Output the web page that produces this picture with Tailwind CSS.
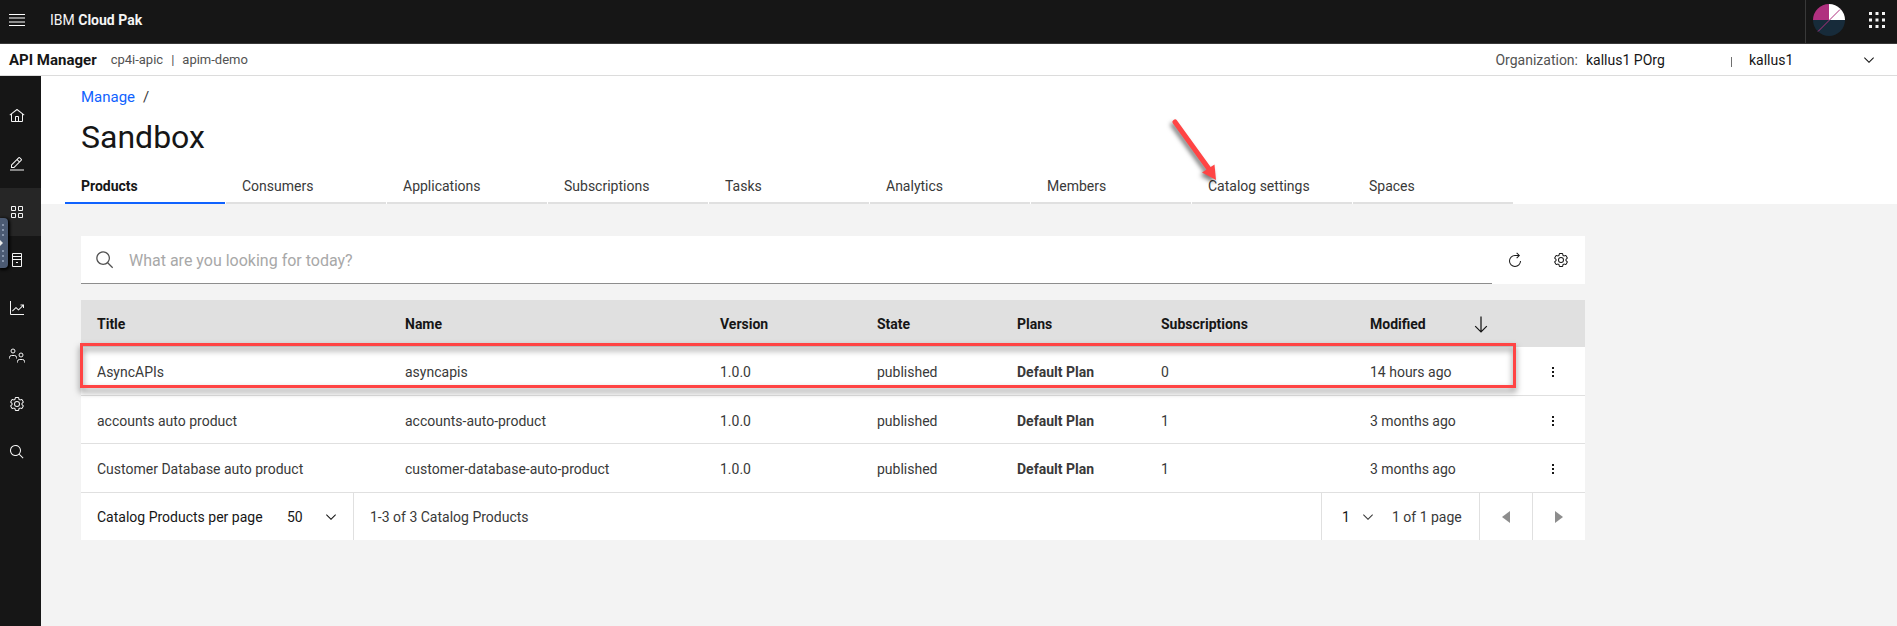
<!DOCTYPE html>
<html lang="en">
<head>
<meta charset="utf-8">
<title>API Manager – Sandbox</title>
<script src="https://cdn.jsdelivr.net/npm/@tailwindcss/browser@4"></script>
</head>
<body class="min-h-screen flex flex-col bg-[#f3f3f3] font-[Roboto,'Noto_Sans',sans-serif] text-sm leading-5 text-[#393939]">
<svg class="hidden">
  <symbol id="chevron" viewBox="0 0 16 16"><path d="M8 11L3 6l.7-.7L8 9.6l4.3-4.3.7.7z"/></symbol>
  <symbol id="search" viewBox="0 0 32 32"><path d="M29 27.6l-7.6-7.6a11 11 0 1 0-1.4 1.4l7.6 7.6zM4 13a9 9 0 1 1 9 9 9 9 0 0 1-9-9z"/></symbol>
  <symbol id="kebab" viewBox="0 0 16 16"><path d="M7 3h2v2H7zM7 7h2v2H7zM7 11h2v2H7z"/></symbol>
  <symbol id="gear" viewBox="0 0 32 32"><path d="M27 16.76v-1.53l1.92-1.68A2 2 0 0 0 29.3 11l-2.36-4a2 2 0 0 0-1.73-1 2 2 0 0 0-.64.1l-2.43.82a11.35 11.35 0 0 0-1.31-.75l-.51-2.52a2 2 0 0 0-2-1.61h-4.68a2 2 0 0 0-2 1.61l-.51 2.52a11.48 11.48 0 0 0-1.32.75l-2.38-.86A2 2 0 0 0 6.79 6a2 2 0 0 0-1.73 1L2.7 11a2 2 0 0 0 .41 2.51L5 15.24v1.53l-1.89 1.68A2 2 0 0 0 2.7 21l2.36 4a2 2 0 0 0 1.73 1 2 2 0 0 0 .64-.1l2.43-.82a11.35 11.35 0 0 0 1.31.75l.51 2.52a2 2 0 0 0 2 1.61h4.72a2 2 0 0 0 2-1.61l.51-2.52a11.48 11.48 0 0 0 1.32-.75l2.42.82a2 2 0 0 0 .64.1 2 2 0 0 0 1.73-1l2.28-4a2 2 0 0 0-.41-2.51zM25.21 24l-3.43-1.16a8.86 8.86 0 0 1-2.71 1.57L18.36 28h-4.72l-.71-3.55a9.36 9.36 0 0 1-2.7-1.57L6.79 24l-2.36-4 2.72-2.4a8.9 8.9 0 0 1 0-3.13L4.43 12l2.36-4 3.43 1.16a8.86 8.86 0 0 1 2.71-1.57L13.64 4h4.72l.71 3.55a9.36 9.36 0 0 1 2.7 1.57L25.21 8l2.36 4-2.72 2.4a8.9 8.9 0 0 1 0 3.13L27.57 20zM16 22a6 6 0 1 1 6-6 5.94 5.94 0 0 1-6 6zm0-10a3.91 3.91 0 0 0-4 4 3.91 3.91 0 0 0 4 4 3.91 3.91 0 0 0 4-4 3.91 3.91 0 0 0-4-4z"/></symbol>
</svg>

<header class="flex h-11 items-center border-b border-[#393939] bg-[#161616] text-[#f4f4f4]">
  <button type="button" aria-label="Menu" class="ml-[7px] flex size-5 items-center justify-center pb-1">
    <svg class="size-4" viewBox="0 0 16 16"><path fill="#fff" d="M0 2h16v1H0zM0 13h16v1H0z"/><path fill="#8d8d8d" d="M0 5h16v2H0zM0 9h16v2H0z"/></svg>
  </button>
  <a href="#" class="ml-[23px] pb-1">IBM <b class="font-bold">Cloud Pak</b></a>
  <div class="ml-auto flex h-full items-center border-l border-[#393939] pb-1">
    <button type="button" aria-label="Account" class="ml-[7px]">
      <svg class="size-8" viewBox="0 0 32 32"><path fill="#b0307f" d="M16 16H0A16 16 0 0 1 16 0z"/><path fill="#fff" d="M16 16V0a16 16 0 0 1 16 16z"/><path fill="#172b3a" d="M0 16h32a16 16 0 0 1-32 0z"/><path stroke="#b0307f" d="M5 27.500L27 5.500"/></svg>
    </button>
    <button type="button" aria-label="App switcher" class="mr-3 ml-6">
      <svg class="size-4" viewBox="0 0 16 16" fill="#f4f4f4"><path d="M0 0h3v3H0zM6.500 0h3v3h-3zM13 0h3v3h-3zM0 6.500h3v3H0zM6.500 6.500h3v3h-3zM13 6.500h3v3h-3zM0 13h3v3H0zM6.500 13h3v3h-3zM13 13h3v3h-3z"/></svg>
    </button>
  </div>
</header>

<div class="flex h-8 items-center border-b border-[#dcdcdc] bg-white pt-px text-[#161616]">
  <a href="#" class="ml-[9px] text-[15px] font-bold">API Manager</a>
  <div class="ml-[14px] flex gap-2 text-[13px] text-[#525252]"><span>cp4i-apic</span><span>|</span><span>apim-demo</span></div>
  <div class="ml-auto flex items-center">
    <span class="text-[#525252]">Organization:</span>
    <span class="ml-2 w-[145px]">kallus1 POrg</span>
    <span class="mt-1 h-[10px] w-px bg-[#6f6f6f]"></span>
    <button type="button" class="ml-[17px] mr-5 flex w-[128px] items-center justify-between">kallus1 <svg class="size-4" fill="currentColor"><use href="#chevron"/></svg></button>
  </div>
</div>

<div class="flex grow">
  <nav aria-label="Main" class="relative w-[41px] shrink-0 bg-[#161616] pt-4 text-[#f4f4f4]">
    <a href="#" aria-label="Home" class="flex h-12 items-center pl-[9px]"><svg class="size-4" viewBox="0 0 32 32" fill="currentColor"><path d="M16.610 2.210a1 1 0 0 0-1.240 0L1 13.420 2.240 15 4 13.620V26a2 2 0 0 0 2 2h20a2 2 0 0 0 2-2V13.630L29.760 15 31 13.430zM18 26h-4v-8h4zm2 0v-8a2 2 0 0 0-2-2h-4a2 2 0 0 0-2 2v8H6V12.060l10-7.790 10 7.800V26z"/></svg></a>
    <a href="#" aria-label="Develop" class="flex h-12 items-center pl-[9px]"><svg class="size-4" viewBox="0 0 32 32" fill="currentColor"><path d="M2 27h28v2H2zM25.400 9a2 2 0 0 0 0-2.800l-3.600-3.600a2 2 0 0 0-2.800 0l-15 15V24h6.400zm-5-5L24 7.600l-3 3L17.400 7zM6 22v-3.600l10-10 3.600 3.600-10 10z"/></svg></a>
    <a href="#" aria-label="Manage" aria-current="page" class="flex h-12 items-center bg-[#262626] pl-[9px]"><svg class="size-4" viewBox="0 0 16 16" fill="none" stroke="currentColor"><path d="M2.500 2.500h4v4h-4zM9.500 2.500h4v4h-4zM2.500 9.500h4v4h-4zM9.500 9.500h4v4h-4z"/></svg></a>
    <a href="#" aria-label="Catalogs" class="flex h-12 items-center pl-[9px]"><svg class="size-4" viewBox="0 0 16 16" fill="none" stroke="currentColor"><path d="M3.500 1.500h9v13h-9zM3 4.500h10M3 7.500h10M7 10.500h2"/></svg></a>
    <a href="#" aria-label="Analytics" class="flex h-12 items-center pl-[9px]"><svg class="size-4" viewBox="0 0 32 32" fill="currentColor"><path d="M4 2H2v26a2 2 0 0 0 2 2h26v-2H4z"/><path d="M30 9h-7v2h3.600L19 18.600l-4.300-4.300a1 1 0 0 0-1.400 0L6 21.600 7.400 23l6.600-6.600 4.300 4.300a1 1 0 0 0 1.400 0L28 12.400V16h2z"/></svg></a>
    <a href="#" aria-label="Members" class="flex h-12 items-center pl-[9px]"><svg class="size-4" viewBox="0 0 16 16" fill="none" stroke="currentColor"><circle cx="4" cy="3" r="2"/><circle cx="12" cy="7" r="2"/><path d="M.5 10.500V9.500a2 2 0 0 1 2-2h3a2 2 0 0 1 2 2v1M8.500 14.500v-1a2 2 0 0 1 2-2h3a2 2 0 0 1 2 2v1"/></svg></a>
    <a href="#" aria-label="Settings" class="flex h-12 items-center pl-[9px]"><svg class="size-4" fill="currentColor"><use href="#gear"/></svg></a>
    <a href="#" aria-label="Search" class="flex h-12 items-center pl-[9px]"><svg class="size-4" fill="currentColor"><use href="#search"/></svg></a>
    <button type="button" aria-label="Open panel" class="absolute top-[142px] left-0 h-[50px] w-2 rounded-r bg-[#4b5a73] shadow-[1px_1px_3px_1px_#000]">
      <svg class="h-[50px] w-2" viewBox="0 0 8 50"><path fill="#8796ad" d="M2 6h2v2H2zM2 11h2v2H2zM2 16h2v2H2zM2 32h2v2H2zM2 37h2v2H2zM2 42h2v2H2z"/><path fill="#e8e8e8" d="M0 22l3 3-3 3z"/></svg>
    </button>
  </nav>

  <main class="min-w-0 grow">
    <div class="relative bg-white pt-[11px]">
      <nav aria-label="Breadcrumb" class="flex gap-2 pl-10 text-[15px]"><a href="#" class="text-[#0f62fe]">Manage</a><span>/</span></nav>
      <h1 class="mt-[10px] pl-10 text-[32px] leading-10 text-[#161616]">Sandbox</h1>
      <div role="tablist" class="mt-[7px] flex gap-px pl-6">
        <button type="button" role="tab" aria-selected="true" class="h-10 w-40 border-b-2 border-[#0f62fe] pl-4 pt-[6px] text-left font-bold text-[#161616]">Products</button>
        <button type="button" role="tab" class="h-10 w-40 border-b-2 border-[#e0e0e0] pl-4 pt-[6px] text-left">Consumers</button>
        <button type="button" role="tab" class="h-10 w-40 border-b-2 border-[#e0e0e0] pl-4 pt-[6px] text-left">Applications</button>
        <button type="button" role="tab" class="h-10 w-40 border-b-2 border-[#e0e0e0] pl-4 pt-[6px] text-left">Subscriptions</button>
        <button type="button" role="tab" class="h-10 w-40 border-b-2 border-[#e0e0e0] pl-4 pt-[6px] text-left">Tasks</button>
        <button type="button" role="tab" class="h-10 w-40 border-b-2 border-[#e0e0e0] pl-4 pt-[6px] text-left">Analytics</button>
        <button type="button" role="tab" class="h-10 w-40 border-b-2 border-[#e0e0e0] pl-4 pt-[6px] text-left">Members</button>
        <button type="button" role="tab" class="h-10 w-40 border-b-2 border-[#e0e0e0] pl-4 pt-[6px] text-left">Catalog settings</button>
        <button type="button" role="tab" class="h-10 w-40 border-b-2 border-[#e0e0e0] pl-4 pt-[6px] text-left">Spaces</button>
      </div>
      <!-- callout arrow to the Catalog settings tab -->
      <svg class="absolute top-[40px] left-[1127px] h-[72px] w-[56px] drop-shadow-[-2px_3px_2px_#00000080]" viewBox="0 0 56 72"><path d="M7 6L41 53" stroke="#ff4444" stroke-width="5" stroke-linecap="round"/><path d="M48 64L34 56.500 46.500 48.500z" fill="#ff4444"/></svg>
    </div>

    <div class="max-w-[1544px] pt-8 pl-10">
      <div class="flex h-12 bg-white">
        <label class="flex grow items-center border-b border-[#8d8d8d] pl-[14px] text-[#525252]">
          <svg class="size-5" fill="currentColor"><use href="#search"/></svg>
          <input type="search" aria-label="Search products" placeholder="What are you looking for today?" class="ml-[14px] h-full grow pt-px text-base outline-none placeholder:text-[#a8a8a8]">
        </label>
        <button type="button" aria-label="Refresh" class="flex w-[45px] items-center justify-center text-[#161616]"><svg class="size-4" viewBox="0 0 32 32" fill="currentColor"><path d="M26 18A10 10 0 1 1 16 8h6.200l-3.600 3.600L20 13l6-6-6-6-1.400 1.400L22.200 6H16a12 12 0 1 0 12 12z"/></svg></button>
        <button type="button" aria-label="Table settings" class="flex w-[48px] items-center justify-center text-[#161616]"><svg class="size-4" fill="currentColor"><use href="#gear"/></svg></button>
      </div>

      <div class="relative mt-4">
        <table class="w-full table-fixed border-separate border-spacing-0 text-left [&_td]:border-b [&_td]:border-[#e0e0e0] [&_td]:pt-[2px]">
          <colgroup><col class="w-[308px]"><col class="w-[315px]"><col class="w-[157px]"><col class="w-[140px]"><col class="w-[144px]"><col class="w-[209px]"><col class="w-[167px]"><col class="w-[64px]"></colgroup>
          <thead class="bg-[#e0e0e0] text-[#161616]">
            <tr class="h-[47px]"><th class="px-4">Title</th><th class="px-4">Name</th><th class="px-4">Version</th><th class="px-4">State</th><th class="px-4">Plans</th><th class="px-4">Subscriptions</th>
              <th class="pl-4 pr-[30px]"><button type="button" class="flex w-full items-center justify-between">Modified <svg class="size-5" viewBox="0 0 32 32" fill="currentColor"><path d="M24.600 18.600L17 26.200V4h-2v22.200l-7.600-7.600L6 20l10 10 10-10z"/></svg></button></th><th><span class="sr-only">Actions</span></th></tr>
          </thead>
          <tbody class="bg-white">
            <tr class="h-[49px]"><td class="px-4">AsyncAPIs</td><td class="px-4">asyncapis</td><td class="px-4">1.0.0</td><td class="px-4">published</td><td class="px-4 font-bold">Default Plan</td><td class="px-4">0</td><td class="px-4">14 hours ago</td><td><button type="button" aria-label="Row actions" class="mx-auto block text-[#161616]"><svg class="size-4" fill="currentColor"><use href="#kebab"/></svg></button></td></tr>
            <tr class="h-12"><td class="px-4">accounts auto product</td><td class="px-4">accounts-auto-product</td><td class="px-4">1.0.0</td><td class="px-4">published</td><td class="px-4 font-bold">Default Plan</td><td class="px-4">1</td><td class="px-4">3 months ago</td><td><button type="button" aria-label="Row actions" class="mx-auto block text-[#161616]"><svg class="size-4" fill="currentColor"><use href="#kebab"/></svg></button></td></tr>
            <tr class="h-[49px]"><td class="px-4">Customer Database auto product</td><td class="px-4">customer-database-auto-product</td><td class="px-4">1.0.0</td><td class="px-4">published</td><td class="px-4 font-bold">Default Plan</td><td class="px-4">1</td><td class="px-4">3 months ago</td><td><button type="button" aria-label="Row actions" class="mx-auto block text-[#161616]"><svg class="size-4" fill="currentColor"><use href="#kebab"/></svg></button></td></tr>
          </tbody>
        </table>
        <!-- highlighted row -->
        <div class="pointer-events-none absolute top-[43px] right-[69px] -left-px h-[45px] border-3 border-[#ff4444] drop-shadow-[0_4px_3px_#00000080]"></div>
      </div>

      <div class="flex h-[47px] items-stretch bg-white">
        <div class="flex w-[273px] items-center border-r border-[#e0e0e0] pl-4 text-[#161616]">
          <label for="size" class="w-[190px]">Catalog Products per page</label>
          <select id="size" class="w-6 appearance-none outline-none"><option>50</option></select>
          <svg class="ml-3 size-4" fill="currentColor"><use href="#chevron"/></svg>
        </div>
        <div class="flex grow items-center pl-4">1-3 of 3 Catalog Products</div>
        <div class="flex w-[158px] items-center border-l border-[#e0e0e0] pl-5">
          <select aria-label="Page" class="w-[18px] appearance-none text-[#161616] outline-none"><option>1</option></select>
          <svg class="size-4" fill="currentColor"><use href="#chevron"/></svg>
          <span class="ml-4 whitespace-nowrap">1 of 1 page</span>
        </div>
        <button type="button" aria-label="Previous page" class="flex w-[53px] items-center justify-center border-l border-[#e0e0e0] text-[#8d8d8d]"><svg class="size-4" viewBox="0 0 16 16" fill="currentColor"><path d="M12 2v12L4 8z"/></svg></button>
        <button type="button" aria-label="Next page" class="flex w-[53px] items-center justify-center border-l border-[#e0e0e0] text-[#8d8d8d]"><svg class="size-4" viewBox="0 0 16 16" fill="currentColor"><path d="M4 2v12l8-6z"/></svg></button>
      </div>
    </div>
  </main>
</div>
</body>
</html>
